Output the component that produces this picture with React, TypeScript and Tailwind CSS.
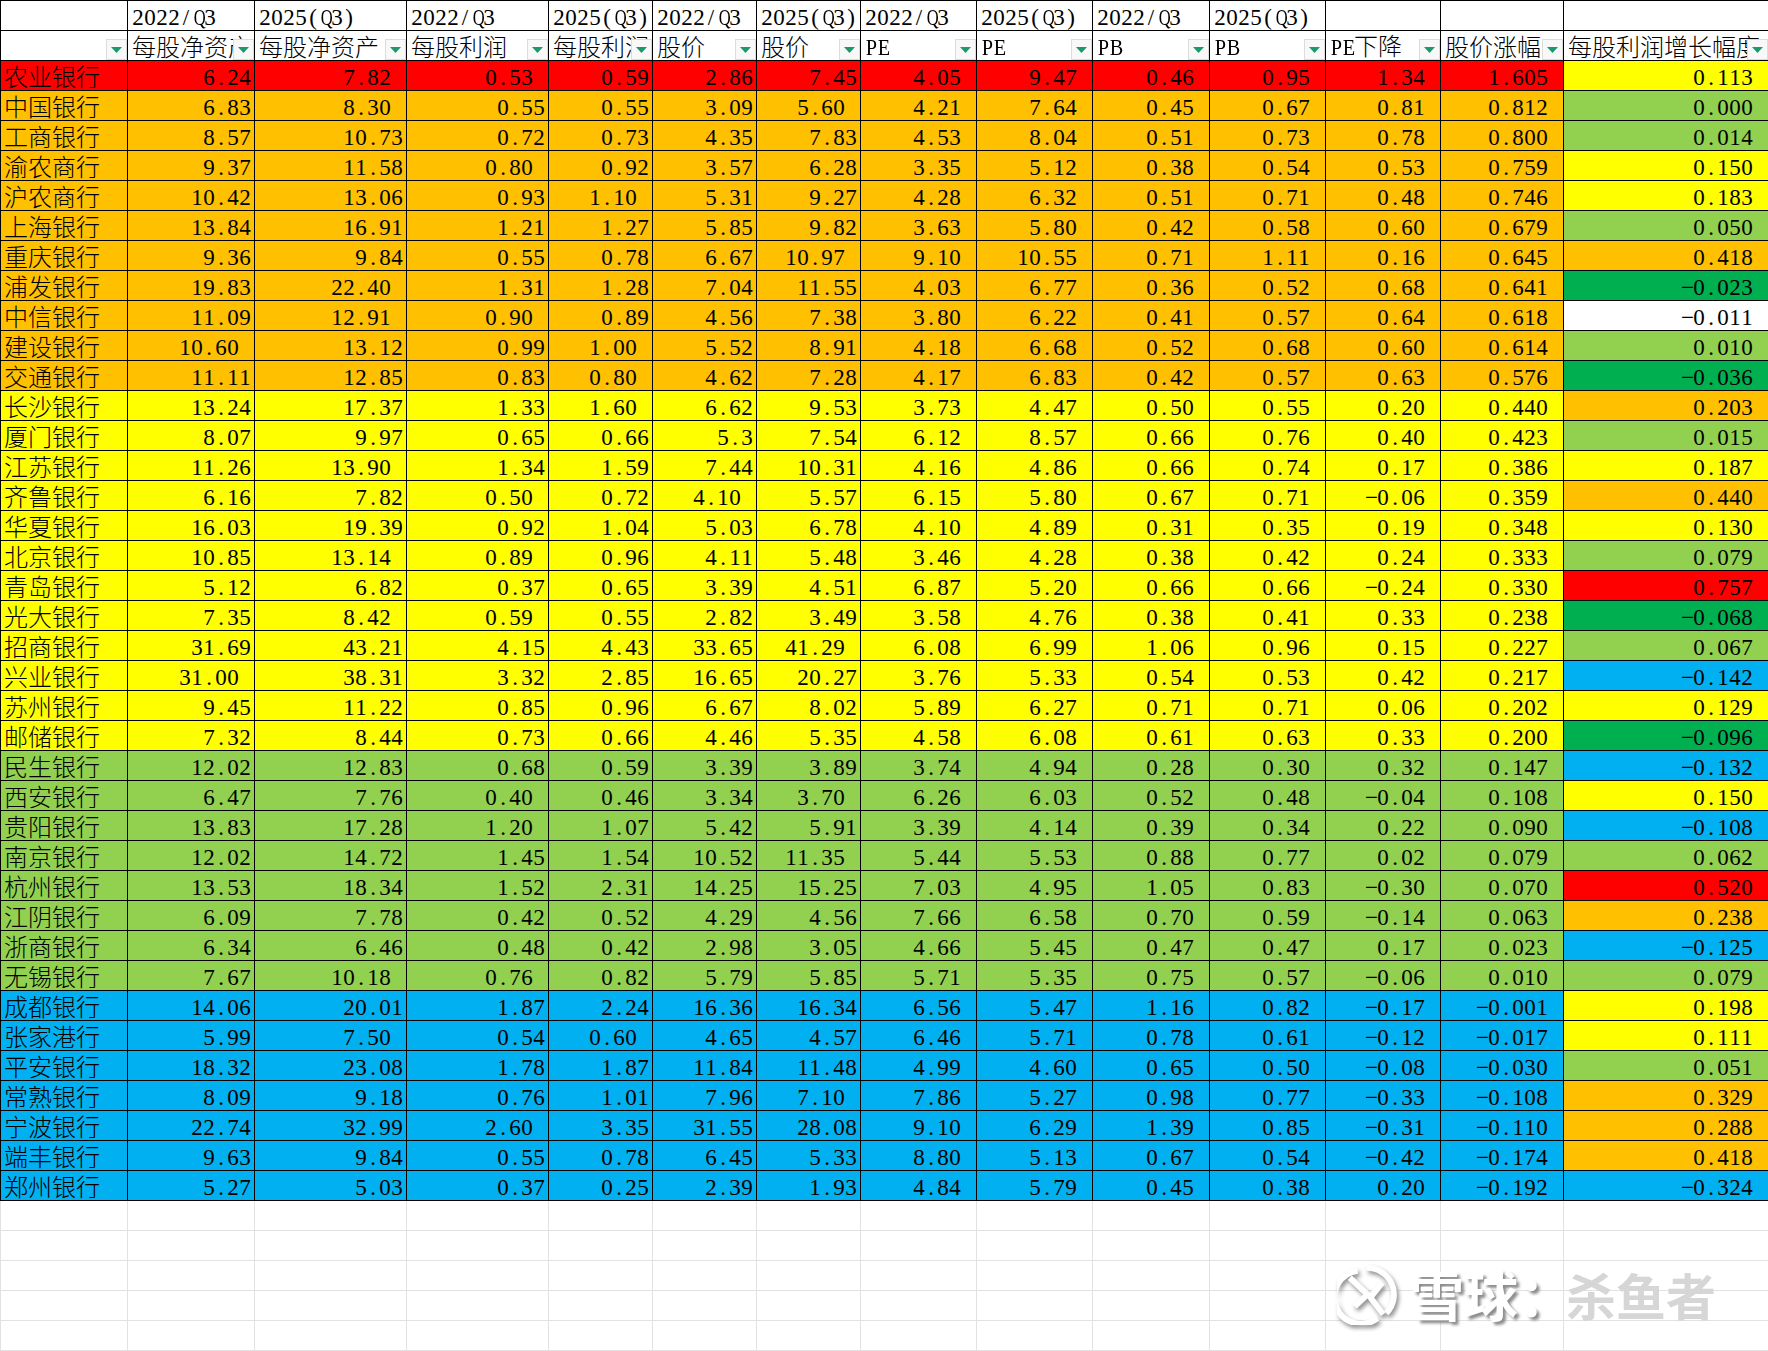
const RED = "bg-[#ff0000]";
const ORANGE = "bg-[#ffc000]";
const YELLOW = "bg-[#ffff00]";
const GREEN = "bg-[#92d050]";
const DARK = "bg-[#00b050]";
const BLUE = "bg-[#00b0f0]";
const WHITE = "bg-white";

const colWidths = [
  "w-[127px]", "w-[127px]", "w-[152px]", "w-[142px]", "w-[104px]", "w-[104px]", "w-[104px]",
  "w-[116px]", "w-[116px]", "w-[117px]", "w-[116px]", "w-[115px]", "w-[123px]", "w-[205px]",
];

const topHeaders = [
  "", "2022/Q3", "2025(Q3)", "2022/Q3", "2025(Q3)", "2022/Q3", "2025(Q3)",
  "2022/Q3", "2025(Q3)", "2022/Q3", "2025(Q3)", "", "", "",
];

const headers = [
  "", "每股净资产", "每股净资产", "每股利润", "每股利润", "股价", "股价",
  "PE", "PE", "PB", "PB", "PE下降", "股价涨幅", "每股利润增长幅度",
];

// "_" after a value means it sits one character further left in its cell
const rows: [string, string, string][] = [
  ["农业银行 6.24 7.82_ 0.53_ 0.59 2.86 7.45 4.05 9.47 0.46 0.95 1.34 1.605 0.113", RED, YELLOW],
  ["中国银行 6.83 8.30_ 0.55 0.55 3.09 5.60_ 4.21 7.64 0.45 0.67 0.81 0.812 0.000", ORANGE, GREEN],
  ["工商银行 8.57 10.73 0.72 0.73 4.35 7.83 4.53 8.04 0.51 0.73 0.78 0.800 0.014", ORANGE, GREEN],
  ["渝农商行 9.37 11.58 0.80_ 0.92 3.57 6.28 3.35 5.12 0.38 0.54 0.53 0.759 0.150", ORANGE, YELLOW],
  ["沪农商行 10.42 13.06 0.93 1.10_ 5.31 9.27 4.28 6.32 0.51 0.71 0.48 0.746 0.183", ORANGE, YELLOW],
  ["上海银行 13.84 16.91 1.21 1.27 5.85 9.82 3.63 5.80 0.42 0.58 0.60 0.679 0.050", ORANGE, GREEN],
  ["重庆银行 9.36 9.84 0.55 0.78 6.67 10.97_ 9.10 10.55 0.71 1.11 0.16 0.645 0.418", ORANGE, ORANGE],
  ["浦发银行 19.83 22.40_ 1.31 1.28 7.04 11.55 4.03 6.77 0.36 0.52 0.68 0.641 -0.023", ORANGE, DARK],
  ["中信银行 11.09 12.91_ 0.90_ 0.89 4.56 7.38 3.80 6.22 0.41 0.57 0.64 0.618 -0.011", ORANGE, WHITE],
  ["建设银行 10.60_ 13.12 0.99 1.00_ 5.52 8.91 4.18 6.68 0.52 0.68 0.60 0.614 0.010", ORANGE, GREEN],
  ["交通银行 11.11 12.85 0.83 0.80_ 4.62 7.28 4.17 6.83 0.42 0.57 0.63 0.576 -0.036", ORANGE, DARK],
  ["长沙银行 13.24 17.37 1.33 1.60_ 6.62 9.53 3.73 4.47 0.50 0.55 0.20 0.440 0.203", YELLOW, ORANGE],
  ["厦门银行 8.07 9.97 0.65 0.66 5.3 7.54 6.12 8.57 0.66 0.76 0.40 0.423 0.015", YELLOW, GREEN],
  ["江苏银行 11.26 13.90_ 1.34 1.59 7.44 10.31 4.16 4.86 0.66 0.74 0.17 0.386 0.187", YELLOW, YELLOW],
  ["齐鲁银行 6.16 7.82 0.50_ 0.72 4.10_ 5.57 6.15 5.80 0.67 0.71 -0.06 0.359 0.440", YELLOW, ORANGE],
  ["华夏银行 16.03 19.39 0.92 1.04 5.03 6.78 4.10 4.89 0.31 0.35 0.19 0.348 0.130", YELLOW, YELLOW],
  ["北京银行 10.85 13.14_ 0.89_ 0.96 4.11 5.48 3.46 4.28 0.38 0.42 0.24 0.333 0.079", YELLOW, GREEN],
  ["青岛银行 5.12 6.82 0.37 0.65 3.39 4.51 6.87 5.20 0.66 0.66 -0.24 0.330 0.757", YELLOW, RED],
  ["光大银行 7.35 8.42_ 0.59_ 0.55 2.82 3.49 3.58 4.76 0.38 0.41 0.33 0.238 -0.068", YELLOW, DARK],
  ["招商银行 31.69 43.21 4.15 4.43 33.65 41.29_ 6.08 6.99 1.06 0.96 0.15 0.227 0.067", YELLOW, GREEN],
  ["兴业银行 31.00_ 38.31 3.32 2.85 16.65 20.27 3.76 5.33 0.54 0.53 0.42 0.217 -0.142", YELLOW, BLUE],
  ["苏州银行 9.45 11.22 0.85 0.96 6.67 8.02 5.89 6.27 0.71 0.71 0.06 0.202 0.129", YELLOW, YELLOW],
  ["邮储银行 7.32 8.44 0.73 0.66 4.46 5.35 4.58 6.08 0.61 0.63 0.33 0.200 -0.096", YELLOW, DARK],
  ["民生银行 12.02 12.83 0.68 0.59 3.39 3.89 3.74 4.94 0.28 0.30 0.32 0.147 -0.132", GREEN, BLUE],
  ["西安银行 6.47 7.76 0.40_ 0.46 3.34 3.70_ 6.26 6.03 0.52 0.48 -0.04 0.108 0.150", GREEN, YELLOW],
  ["贵阳银行 13.83 17.28 1.20_ 1.07 5.42 5.91 3.39 4.14 0.39 0.34 0.22 0.090 -0.108", GREEN, BLUE],
  ["南京银行 12.02 14.72 1.45 1.54 10.52 11.35_ 5.44 5.53 0.88 0.77 0.02 0.079 0.062", GREEN, GREEN],
  ["杭州银行 13.53 18.34 1.52 2.31 14.25 15.25 7.03 4.95 1.05 0.83 -0.30 0.070 0.520", GREEN, RED],
  ["江阴银行 6.09 7.78 0.42 0.52 4.29 4.56 7.66 6.58 0.70 0.59 -0.14 0.063 0.238", GREEN, ORANGE],
  ["浙商银行 6.34 6.46 0.48 0.42 2.98 3.05 4.66 5.45 0.47 0.47 0.17 0.023 -0.125", GREEN, BLUE],
  ["无锡银行 7.67 10.18_ 0.76_ 0.82 5.79 5.85 5.71 5.35 0.75 0.57 -0.06 0.010 0.079", GREEN, GREEN],
  ["成都银行 14.06 20.01 1.87 2.24 16.36 16.34 6.56 5.47 1.16 0.82 -0.17 -0.001 0.198", BLUE, YELLOW],
  ["张家港行 5.99 7.50_ 0.54 0.60_ 4.65 4.57 6.46 5.71 0.78 0.61 -0.12 -0.017 0.111", BLUE, YELLOW],
  ["平安银行 18.32 23.08 1.78 1.87 11.84 11.48 4.99 4.60 0.65 0.50 -0.08 -0.030 0.051", BLUE, GREEN],
  ["常熟银行 8.09 9.18 0.76 1.01 7.96 7.10_ 7.86 5.27 0.98 0.77 -0.33 -0.108 0.329", BLUE, ORANGE],
  ["宁波银行 22.74 32.99 2.60_ 3.35 31.55 28.08 9.10 6.29 1.39 0.85 -0.31 -0.110 0.288", BLUE, ORANGE],
  ["端丰银行 9.63 9.84 0.55 0.78 6.45 5.33 8.80 5.13 0.67 0.54 -0.42 -0.174 0.418", BLUE, ORANGE],
  ["郑州银行 5.27 5.03 0.37 0.25 2.39 1.93 4.84 5.79 0.45 0.38 0.20 -0.192 -0.324", BLUE, BLUE],
];

// Excel shows this in a song face where latin glyphs are exactly half a CJK glyph
function SheetText({ text }: { text: string }) {
  return (
    <>
      {text.split("").map((ch, i) =>
        ch.charCodeAt(0) < 128 ? (
          <span
            key={i}
            className={`inline-block w-3 text-center text-[23px] font-normal whitespace-pre ${ch === "Q" ? "scale-x-[0.72]" : /[A-Z]/.test(ch) ? "scale-x-[0.88]" : ""}`}
          >
            {ch === "-" ? "−" : ch}
          </span>
        ) : (
          <span key={i}>{ch}</span>
        )
      )}
    </>
  );
}

function FilterButton() {
  return (
    <span className="absolute right-0 top-[8px] flex h-[21px] w-[21px] items-center justify-center border border-[#dcdcdc] bg-[#f8f8f8]">
      <svg width="11" height="6" viewBox="0 0 11 6">
        <polygon points="0,0 11,0 5.5,6" fill="#1a9b6c" />
      </svg>
    </span>
  );
}

const cellClass = "relative h-[30px] overflow-hidden whitespace-nowrap border border-black p-0 align-bottom leading-[24px] font-light";

function App() {
  return (
    <div className="relative h-[1351px] w-[1768px] overflow-hidden bg-white text-[24px] text-black font-['Liberation_Serif','Noto_Sans_CJK_SC',serif]">
      <table className="w-[1768px] table-fixed border-collapse">
        <colgroup>
          {colWidths.map((w, i) => (
            <col key={i} className={w} />
          ))}
        </colgroup>
        <tbody>
          <tr>
            {topHeaders.map((h, i) => (
              <td key={i} className={`${cellClass} pl-[4px] text-left`}>
                <SheetText text={h} />
              </td>
            ))}
          </tr>
          <tr>
            {headers.map((h, i) => (
              <td key={i} className={`${cellClass} pl-[4px] text-left`}>
                <SheetText text={h} />
                <FilterButton />
              </td>
            ))}
          </tr>
          {rows.map(([line, rowColor, lastColor]) => {
            const [name, ...values] = line.split(" ");
            return (
              <tr key={name}>
                <td className={`${cellClass} ${rowColor} pl-[3px] text-left`}>{name}</td>
                {values.map((v, i) => (
                  <td
                    key={i}
                    className={`${cellClass} text-right ${i === 12 ? lastColor : rowColor} ${i < 6 ? "pr-[3px]" : "pr-[15px]"}`}
                  >
                    <SheetText text={v.replace("_", " ")} />
                  </td>
                ))}
              </tr>
            );
          })}
          {[0, 1, 2, 3, 4].map((r) => (
            <tr key={r}>
              {colWidths.map((_, i) => (
                <td key={i} className="h-[30px] border border-[#e2e2e2] p-0" />
              ))}
            </tr>
          ))}
        </tbody>
      </table>

      {/* watermark */}
      <div className="absolute left-[1337px] top-[1262px] flex items-center">
        <svg width="63" height="63" viewBox="0 0 64 64" className="drop-shadow-[2px_3px_2px_#8c8c8c]">
          <path d="M21 9 A27 27 0 1 0 41 57" fill="none" stroke="#fff" strokeWidth="6" />
          <path d="M30 6 A27 27 0 0 1 50 52" fill="none" stroke="#fff" strokeWidth="6" />
          <path d="M13 16 L31 33 L18 45" fill="none" stroke="#fff" strokeWidth="6" />
          <path d="M46 21 L34 36 L47 53" fill="none" stroke="#fff" strokeWidth="6" />
        </svg>
        <span className="ml-[10px] text-[54px] leading-[60px] font-bold text-white font-['Noto_Sans_CJK_SC',sans-serif] [text-shadow:3px_3px_3px_#8c8c8c]">
          雪球：
        </span>
        <span className="ml-[-6px] text-[50px] leading-[60px] font-bold text-[#d6d6d6] font-['Noto_Sans_CJK_SC',sans-serif]">
          杀鱼者
        </span>
      </div>
    </div>
  );
}

export default App;
